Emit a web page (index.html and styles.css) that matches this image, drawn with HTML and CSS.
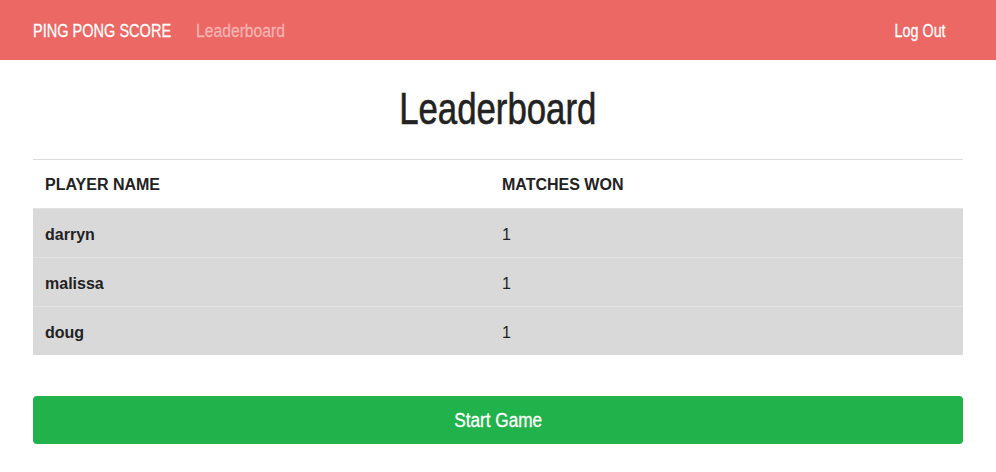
FILE: index.html
```html
<!DOCTYPE html>
<html>
<head>
<meta charset="utf-8">
<link rel="stylesheet" href="styles.css">
</head>
<body>
<nav class="navbar">
  <div class="nav-left">
    <span class="brand">PING PONG SCORE</span>
    <span class="nav-link">Leaderboard</span>
  </div>
  <span class="logout">Log Out</span>
</nav>
<main class="container">
  <h1 class="title"><span class="title-text">Leaderboard</span></h1>
  <table class="board">
    <thead>
      <tr><th class="col-name">PLAYER NAME</th><th>MATCHES WON</th></tr>
    </thead>
    <tbody>
      <tr><td class="name">darryn</td><td>1</td></tr>
      <tr><td class="name">malissa</td><td>1</td></tr>
      <tr><td class="name">doug</td><td>1</td></tr>
    </tbody>
  </table>
  <button class="start"><span class="start-text">Start Game</span></button>
</main>
</body>
</html>
```
FILE: styles.css
```css
html, body { margin: 0; padding: 0; }
body {
  font-family: "Liberation Sans", Arial, sans-serif;
  font-size: 16px;
  color: #222;
  background: #fff;
}
.navbar {
  height: 60px;
  box-sizing: border-box;
  padding: 2px 50px 0 33px;
  background: #eb6864;
  display: flex;
  align-items: center;
  justify-content: space-between;
  font-family: "Liberation Sans", sans-serif;
  font-size: 19px;
  -webkit-text-stroke: 0.3px;
}
.nav-left { display: flex; align-items: center; }
.brand {
  color: #fff;
  display: inline-block;
  transform: scaleX(0.765);
  transform-origin: left center;
  margin-right: -18px;
}
.nav-link {
  color: #f5b3b1;
  display: inline-block;
  transform: scaleX(0.826);
  transform-origin: left center;
}
.logout {
  color: #fff;
  display: inline-block;
  transform: scaleX(0.755);
  transform-origin: right center;
}
.container { padding: 0 33px; }
.title {
  font-family: "Liberation Sans", sans-serif;
  font-weight: normal;
  font-size: 44px;
  text-align: center;
  margin: 26px 0 28px;
  line-height: 45px;
  color: #222;
  -webkit-text-stroke: 0.6px #222;
}
.title-text {
  display: inline-block;
  transform: scaleX(0.79);
  transform-origin: center;
}
.board {
  width: 100%;
  border-collapse: collapse;
  border-top: 1px solid #ddd;
}
.board th {
  text-align: left;
  font-weight: bold;
  padding: 2px 12px 0;
  height: 46px;
}
.col-name { width: 433px; }
.board td {
  background: #d9d9d9;
  height: 45px;
  padding: 3px 12px 0;
  border-top: 1px solid #e2e2e2;
}
.board td.name { font-weight: bold; }
.start {
  display: block;
  width: 100%;
  margin-top: 41px;
  height: 48px;
  border: none;
  border-radius: 4px;
  background: #22b24c;
  color: #fff;
  font-family: "Liberation Sans", sans-serif;
  font-size: 20px;
  padding-top: 2px;
  -webkit-text-stroke: 0.3px #fff;
}
.start-text {
  display: inline-block;
  transform: scaleX(0.86);
  transform-origin: center;
}
```
